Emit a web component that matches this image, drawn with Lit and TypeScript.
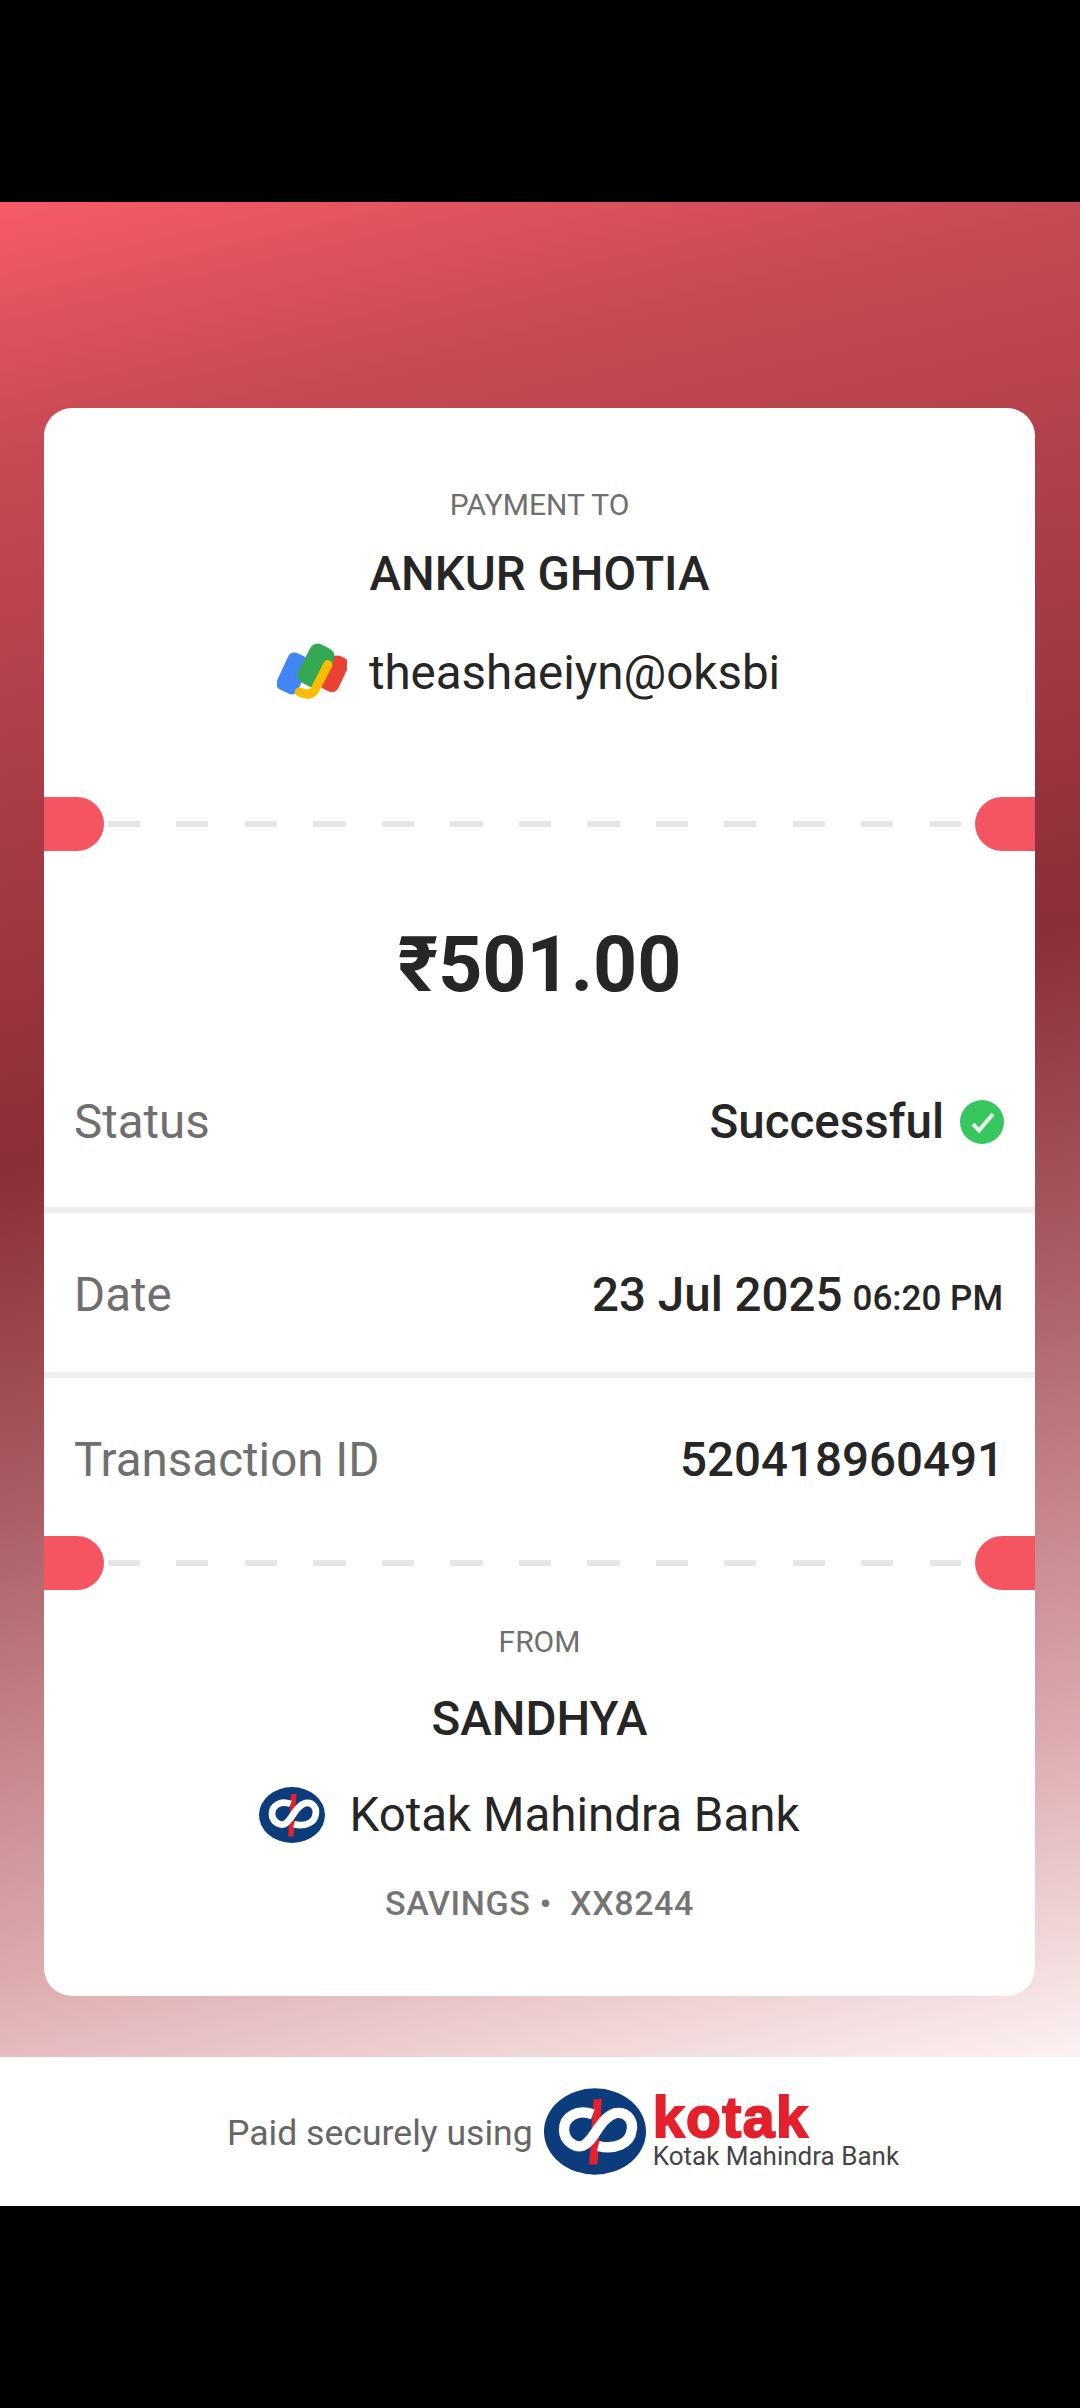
import { LitElement, html, css, svg } from 'lit';
import { customElement } from 'lit/decorators.js';

const kotakMark = svg`
  <ellipse cx="152.5" cy="129" rx="152.5" ry="129" fill="#0c3c7c"></ellipse>
  <path d="M148 33l25-2-13 197h-25z" fill="#e4202c"></path>
  <path d="M146 78C100 60 60 85 60 124c0 36 35 54 55 48 35-12 50-84 100-98 35-6 53 26 47 51-4 40-52 60-100 47" fill="none" stroke="#fff" stroke-width="31"></path>
`;

@customElement('app-root')
export class AppRoot extends LitElement {
  static styles = css`
    :host {
      display: block;
      height: 2408px;
      background: #000;
      font-family: Roboto, "Noto Sans", sans-serif;
      color: #262626;
      overflow: hidden;
    }

    .top-bar {
      height: 202px;
    }

    .screen {
      height: 1855px;
      box-sizing: border-box;
      padding: 206px 45px 0 44px;
      background: linear-gradient(167deg, #f75a66 0%, #c64a54 12%, #8a2e37 46%, #ab5c64 62%, #deadb1 85%, #fdf2f2 100%);
    }

    .card {
      position: relative;
      height: 1588px;
      background: #fff;
      border-radius: 28px;
    }

    .party {
      display: flex;
      flex-direction: column;
      align-items: center;
    }

    .party.payee {
      height: 388px;
      padding-top: 76px;
      box-sizing: border-box;
    }

    .party.payer {
      padding-top: 30px;
    }

    .caption {
      font-size: 30px;
      line-height: 42px;
      color: #6f6f6f;
    }

    .name {
      font-size: 47.5px;
      font-weight: 500;
      line-height: 60px;
      margin-top: 26px;
    }

    .payee .name {
      margin-top: 18px;
    }

    .handle {
      display: flex;
      align-items: center;
      gap: 22px;
      font-size: 47.5px;
      line-height: 60px;
      margin-top: 39px;
      margin-right: 22px;
    }

    .bank {
      gap: 24px;
      margin-top: 36px;
      margin-right: 20px;
    }

    .handle svg {
      display: block;
    }

    .account {
      font-size: 34px;
      font-weight: 500;
      line-height: 44px;
      color: #757575;
      margin-top: 36px;
      letter-spacing: 0.6px;
    }

    .tear {
      position: relative;
      height: 56px;
      display: flex;
      align-items: center;
    }

    .tear .dashes {
      flex: 1;
      height: 6px;
      margin: 0 74px 0 64px;
      background: repeating-linear-gradient(90deg, #e6e6e6 0 32px, transparent 32px 68.5px);
    }

    .notch {
      position: absolute;
      top: 1px;
      width: 60px;
      height: 54px;
      background: #f55561;
    }

    .notch.left {
      left: 0;
      border-radius: 0 27px 27px 0;
    }

    .notch.right {
      right: 0;
      border-radius: 27px 0 0 27px;
    }

    .amount {
      height: 185px;
      box-sizing: border-box;
      padding-top: 69px;
      text-align: center;
      font-size: 77px;
      font-weight: 700;
      line-height: 88px;
    }

    .row {
      display: flex;
      justify-content: space-between;
      align-items: center;
      box-sizing: border-box;
      padding: 0 31px 0 30px;
      font-size: 47.5px;
      color: #6f6f6f;
    }

    .row + .row {
      border-top: 6px solid #eeeeee;
    }

    .row.status {
      height: 170px;
    }

    .row.date {
      height: 165px;
      padding-top: 4px;
      padding-right: 32px;
    }

    .row.txn {
      height: 163px;
      padding-top: 6px;
    }

    .row .value {
      display: flex;
      align-items: center;
      font-weight: 500;
      color: #262626;
    }

    .row .value .time {
      font-size: 35px;
      margin-left: 10px;
      position: relative;
      top: 4px;
    }

    .check {
      margin-left: 16px;
      display: block;
    }

    .footer {
      height: 149px;
      background: #fff;
      display: flex;
      align-items: center;
      justify-content: center;
      font-size: 35.6px;
      color: #666;
      padding-left: 46px;
    }

    .footer .paid {
      padding-top: 2px;
    }

    .footer .mark {
      display: block;
      margin-left: 11px;
    }

    .brand {
      margin-left: 7px;
      padding-top: 4px;
      display: flex;
      flex-direction: column;
      color: #444;
    }

    .brand b {
      font-family: "Liberation Sans", Arial, sans-serif;
      font-weight: 700;
      font-size: 57px;
      line-height: 44px;
      letter-spacing: 1.5px;
      color: #e4202c;
      -webkit-text-stroke: 2px #e4202c;
    }

    .brand span {
      font-size: 26px;
      line-height: 34px;
    }
  `;

  private tear() {
    return html`
      <div class="tear">
        <div class="notch left"></div>
        <div class="dashes"></div>
        <div class="notch right"></div>
      </div>
    `;
  }

  render() {
    return html`
      <div class="top-bar"></div>
      <div class="screen">
        <div class="card">
          <div class="party payee">
            <div class="caption">PAYMENT TO</div>
            <div class="name">ANKUR GHOTIA</div>
            <div class="handle">
              <svg width="70" height="60" viewBox="22 32 212 180">
                <rect x="167" y="68" width="58" height="112" rx="22" fill="#ea4335" transform="rotate(25 195 125)"></rect>
                <rect x="36" y="62" width="70" height="122" rx="20" fill="#4285f4" transform="rotate(25 70 122)"></rect>
                <rect x="100" y="35" width="80" height="130" rx="26" fill="#34a853" transform="rotate(27 140 100)"></rect>
                <path d="M176 97l-38 74c-8 16-24 20-48 8" fill="none" stroke="#fbbc04" stroke-width="28" stroke-linecap="round"></path>
              </svg>
              <span>theashaeiyn@oksbi</span>
            </div>
          </div>
          ${this.tear()}
          <div class="amount">₹501.00</div>
          <div class="row status">
            <span>Status</span>
            <span class="value">Successful
              <svg class="check" width="44" height="44" viewBox="0 0 44 44">
                <circle cx="22" cy="22" r="22" fill="#38c75f"></circle>
                <path d="M13 24l6 6.5L33 14" fill="none" stroke="#e9f9ed" stroke-width="4"></path>
              </svg>
            </span>
          </div>
          <div class="row date">
            <span>Date</span>
            <span class="value">23 Jul 2025<span class="time">06:20 PM</span></span>
          </div>
          <div class="row txn">
            <span>Transaction ID</span>
            <span class="value">520418960491</span>
          </div>
          ${this.tear()}
          <div class="party payer">
            <div class="caption">FROM</div>
            <div class="name">SANDHYA</div>
            <div class="handle bank">
              <svg width="66" height="56" viewBox="0 0 305 258">${kotakMark}</svg>
              <span>Kotak Mahindra Bank</span>
            </div>
            <div class="account">SAVINGS •&nbsp; XX8244</div>
          </div>
        </div>
      </div>
      <div class="footer">
        <span class="paid">Paid securely using</span>
        <svg class="mark" width="102" height="87" viewBox="0 0 305 258">${kotakMark}</svg>
        <div class="brand">
          <b>kotak</b>
          <span>Kotak Mahindra Bank</span>
        </div>
      </div>
    `;
  }
}
